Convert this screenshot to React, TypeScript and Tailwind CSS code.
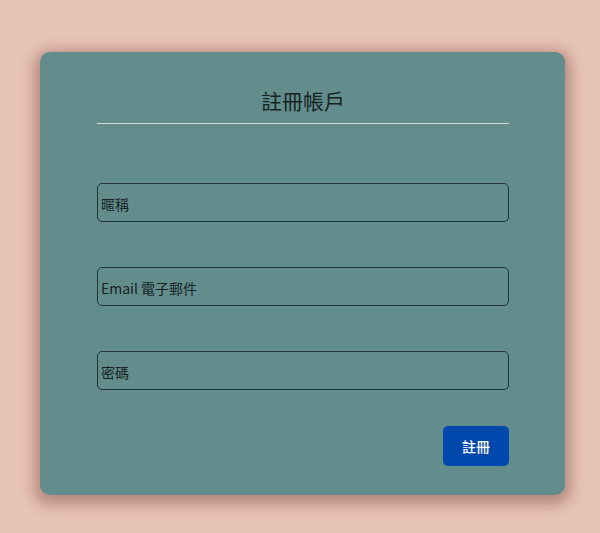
const inputClass =
  "w-full h-[39px] px-[3px] pt-[3px] rounded-[5px] border border-[#1f3434] bg-transparent text-[14px] text-[#152323] placeholder-[#152323] outline-none";

export default function App() {
  return (
    <div
      className="min-h-[533px] w-full bg-[#e8c4b6] pt-[52px] pb-[38px]"
      style={{ fontFamily: '"Noto Sans CJK TC", "Noto Sans", sans-serif' }}
    >
      <div className="ml-[40px] w-[525px] rounded-[10px] bg-[#628d8c] pl-[57px] pr-[56px] pt-[32px] pb-[29px] shadow-[0_4px_14px_6px_rgba(120,70,60,0.45)]">
        <h2 className="border-b border-[#d6d6d6] pb-[7px] text-center text-[21px] leading-[32px] text-[#172424]">
          註冊帳戶
        </h2>
        <form className="mt-[59px] flex flex-col gap-[45px]" onSubmit={(e) => e.preventDefault()}>
          <input type="text" placeholder="暱稱" className={inputClass} />
          <input type="email" placeholder="Email 電子郵件" className={inputClass} />
          <input type="password" placeholder="密碼" className={inputClass} />
          <div className="-mt-[9px] flex justify-end">
            <button
              type="submit"
              className="h-[40px] w-[66px] rounded-[5px] bg-[#0048ab] text-[14px] font-medium text-white"
            >
              註冊
            </button>
          </div>
        </form>
      </div>
    </div>
  );
}
